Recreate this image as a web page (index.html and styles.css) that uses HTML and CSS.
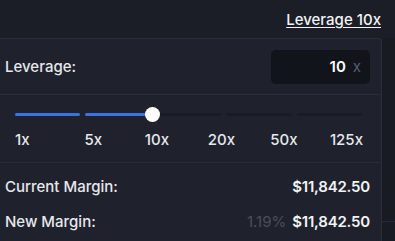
FILE: index.html
```html
<!DOCTYPE html>
<html lang="en">
<head>
    <meta charset="UTF-8">
    <meta name="viewport" content="width=device-width, initial-scale=1.0">
    <title>Leverage</title>
    <link rel="stylesheet" href="styles.css">
</head>
<body>
    <div class="page">
        <div class="top-bar">
            <a class="leverage-link" href="#">Leverage 10x</a>
        </div>

        <div class="content">
            <div class="panel">
                <div class="leverage-row">
                    <span class="label">Leverage:</span>
                    <div class="leverage-input">
                        <span class="value">10</span>
                        <span class="unit">x</span>
                    </div>
                </div>

                <div class="slider-block">
                    <div class="slider">
                        <div class="segment active"></div>
                        <div class="segment active"></div>
                        <div class="segment"></div>
                        <div class="segment"></div>
                        <div class="segment"></div>
                        <div class="thumb"></div>
                    </div>
                    <div class="marks">
                        <span class="mark first">1x</span>
                        <span class="mark" style="left: 22.5%">5x</span>
                        <span class="mark" style="left: 40.8%">10x</span>
                        <span class="mark" style="left: 59.3%">20x</span>
                        <span class="mark" style="left: 77.3%">50x</span>
                        <span class="mark last">125x</span>
                    </div>
                </div>

                <div class="summary">
                    <div class="summary-row">
                        <span class="label">Current Margin:</span>
                        <span class="amount">$11,842.50</span>
                    </div>
                    <div class="summary-row">
                        <span class="label">New Margin:</span>
                        <span class="amount"><span class="ratio">1.19%</span>$11,842.50</span>
                    </div>
                </div>
            </div>

            <div class="side">
                <div class="side-line"></div>
            </div>
        </div>
    </div>
</body>
</html>
```

FILE: styles.css
```css
* {
    margin: 0;
    padding: 0;
    box-sizing: border-box;
}

body {
    background: #1b1e27;
    font-family: Inter, 'Noto Sans', sans-serif;
    color: #e6e8ec;
    overflow: hidden;
}

.page {
    width: 395px;
    height: 241px;
    display: flex;
    flex-direction: column;
}

/* Barra superior */
.top-bar {
    height: 38px;
    display: flex;
    justify-content: flex-end;
    align-items: flex-start;
    padding: 11px 14px 0 0;
}

.leverage-link {
    color: #f2f3f5;
    font-size: 15px;
    font-weight: 500;
    line-height: 18px;
    text-decoration: underline;
    text-underline-offset: 2px;
}

.content {
    flex: 1;
    display: flex;
}

/* Painel */
.panel {
    width: 382px;
    background: #1f222d;
    border-top: 1px solid #2b2e3a;
    border-right: 1px solid #2b2e3a;
    border-top-right-radius: 4px;
    display: flex;
    flex-direction: column;
}

.label {
    font-size: 15px;
    font-weight: 500;
    color: #e6e8ec;
}

.leverage-row {
    height: 56px;
    display: flex;
    align-items: center;
    justify-content: space-between;
    padding: 0 11px 0 5px;
    border-bottom: 1px solid #2a2d38;
}

.leverage-input {
    width: 99px;
    height: 34px;
    background: #12141c;
    border-radius: 5px;
    display: flex;
    align-items: center;
    justify-content: flex-end;
    gap: 7px;
    padding-right: 9px;
}

.leverage-input .value {
    font-size: 15px;
    font-weight: 600;
    color: #ffffff;
}

.leverage-input .unit {
    font-size: 15px;
    color: #585d6b;
}

/* Slider */
.slider-block {
    padding: 12px 19px 0 15px;
    height: 68px;
    border-bottom: 1px solid #2a2d38;
}

.slider {
    position: relative;
    height: 15px;
    display: flex;
    align-items: center;
    gap: 5px;
}

.segment {
    flex: 1;
    height: 3px;
    border-radius: 2px;
    background: #191c25;
}

.segment.active {
    background: #3b71e0;
}

.thumb {
    position: absolute;
    left: 130px;
    top: 0;
    width: 15px;
    height: 15px;
    border-radius: 50%;
    background: #ffffff;
}

.marks {
    position: relative;
    height: 18px;
    margin-top: 8px;
    margin-right: -1px;
}

.mark {
    position: absolute;
    top: 0;
    font-size: 15px;
    font-weight: 500;
    color: #e6e8ec;
    transform: translateX(-50%);
}

.mark.first {
    left: 0;
    transform: none;
}

.mark.last {
    right: 0;
    transform: none;
}

/* Resumo */
.summary {
    padding: 6px 11px 0 5px;
    display: flex;
    flex-direction: column;
}

.summary-row {
    height: 35px;
    display: flex;
    align-items: center;
    justify-content: space-between;
}

.amount {
    font-size: 15px;
    font-weight: 600;
    letter-spacing: -0.2px;
    color: #f2f3f5;
}

.ratio {
    font-size: 15px;
    font-weight: 400;
    letter-spacing: 0;
    color: #4a4e5b;
    margin-right: 6px;
}

.side {
    flex: 1;
    background: #191b23;
    padding-top: 183px;
}

.side-line {
    height: 1px;
    background: #262934;
}
```
